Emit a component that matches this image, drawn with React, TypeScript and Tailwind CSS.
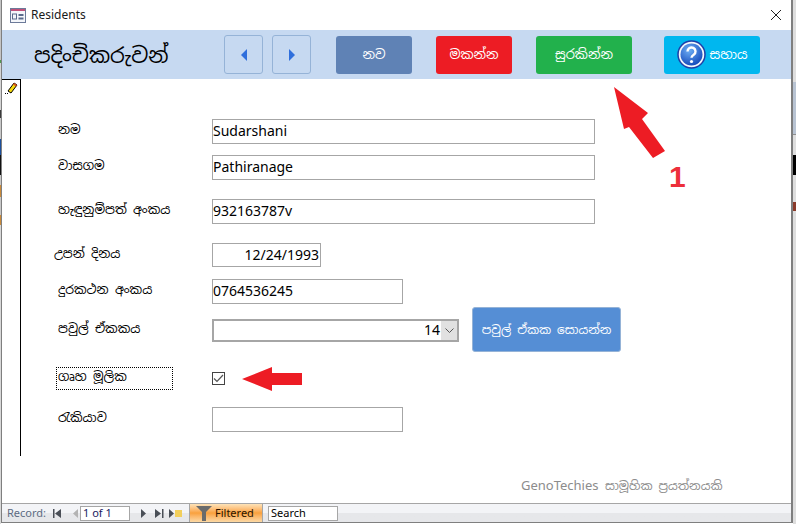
import React from 'react';

const sinhala = { fontFamily: '"Noto Sans Sinhala", "Noto Sans", "DejaVu Sans", sans-serif' };
const tahoma = { fontFamily: '"Noto Sans", "DejaVu Sans", sans-serif' };

// bits of the desktop behind the window, 1px strip on the left
const leftSpecks = [
  { h: 'h-[60px]', bg: 'bg-[#c4c4c4]' },
  { h: 'h-[3px]', bg: 'bg-[#4f9a4f]' },
  { h: 'h-[47px]', bg: 'bg-[#d4d4d4]' },
  { h: 'h-[8px]', bg: 'bg-[#3a3a3a]' },
  { h: 'h-[21px]', bg: 'bg-[#c8c8c8]' },
  { h: 'h-[16px]', bg: 'bg-[#1c4f9c]' },
  { h: 'h-[20px]', bg: 'bg-[#111111]' },
  { h: 'h-[10px]', bg: 'bg-[#c8c8c8]' },
  { h: 'h-[12px]', bg: 'bg-[#c98a3a]' },
  { h: 'h-[18px]', bg: 'bg-[#c8c8c8]' },
  { h: 'h-[10px]', bg: 'bg-[#c98a3a]' },
  { h: 'h-[300px]', bg: 'bg-[#d8d8d8]' },
];

const Label: React.FC<{ children: React.ReactNode; className?: string }> = ({ children, className = '' }) => (
  <span className={`text-[12.5px] leading-none text-black -translate-y-px ${className}`} style={sinhala}>{children}</span>
);

const Field: React.FC<{ w: string; value?: string; right?: boolean }> = ({ w, value, right }) => (
  <div className={`${w} h-full border border-[#a6a6a6] bg-white flex items-center text-[14px] text-black ${right ? 'justify-end pr-px' : ''}`} style={tahoma}>
    <span className="-translate-y-px">{value}</span>
  </div>
);

const NavButton: React.FC<{ points: string }> = ({ points }) => (
  <div className="w-[39px] h-[39px] rounded-[3px] border border-[#95b3d7] flex items-center justify-center">
    <svg width="6" height="12" viewBox="0 0 6 12"><polygon points={points} fill="#2f6fdc" /></svg>
  </div>
);

const HeadButton: React.FC<{ w: string; bg: string; children: React.ReactNode }> = ({ w, bg, children }) => (
  <div className={`${w} ${bg} h-[38px] rounded-[3px] flex items-center justify-center text-white text-[13px]`} style={sinhala}>
    {children}
  </div>
);

const HelpIcon = () => (
  <svg width="29" height="29" viewBox="0 0 29 29" className="mr-1">
    <defs>
      <radialGradient id="help" cx="0.4" cy="0.3" r="0.8">
        <stop offset="0" stopColor="#6fb0f5" />
        <stop offset="1" stopColor="#0b3fb5" />
      </radialGradient>
    </defs>
    <circle cx="14.5" cy="14.5" r="13.5" fill="#f3f6fb" stroke="#1c3fa8" strokeWidth="1.5" />
    <circle cx="14.5" cy="14.5" r="11" fill="url(#help)" />
    <path d="M10.5 11.5a4 4 0 1 1 6.2 3.3c-1.4.9-2.2 1.5-2.2 3" fill="none" stroke="#fff" strokeWidth="2.4" />
    <circle cx="14.5" cy="21.5" r="1.6" fill="#fff" />
  </svg>
);

const TransportIcon: React.FC<{ d: string; color?: string }> = ({ d, color = '#4a4f57' }) => (
  <svg width="9" height="9" viewBox="0 0 9 9" className="shrink-0"><path d={d} fill={color} /></svg>
);

export default function App() {
  return (
    <div className="w-[796px] h-[524px] bg-white flex items-start overflow-hidden" style={{ fontFamily: '"Liberation Sans", "DejaVu Sans", sans-serif' }}>
      <div className="w-px h-full flex flex-col shrink-0">
        {leftSpecks.map((s, i) => (
          <div key={i} className={`${s.h} ${s.bg} shrink-0`} />
        ))}
      </div>

      <div className="w-[792px] h-[523px] border-l border-r-2 border-b border-[#7f7f7f] flex flex-col shrink-0">
        <div className="h-[30px] flex items-center pl-2 pr-2 text-[12px] text-[#1a1a1a] shrink-0" style={tahoma}>
          <svg width="16" height="15" viewBox="0 0 16 15" className="mr-[5px]">
            <rect x="0.5" y="0.5" width="15" height="14" fill="#f4f6fa" stroke="#6c7a99" />
            <rect x="1" y="1" width="14" height="2" fill="#c0507a" />
            <rect x="2.5" y="6" width="4" height="5" fill="none" stroke="#5a6b8c" />
            <rect x="8.5" y="6" width="5" height="2" fill="#5a6b8c" />
            <rect x="8.5" y="9.5" width="5" height="2" fill="#5a6b8c" />
          </svg>
          <span className="flex-1">Residents</span>
          <svg width="12" height="12" viewBox="0 0 12 12" className="mr-px">
            <path d="M1 1l10 10M11 1L1 11" stroke="#222" strokeWidth="1" fill="none" />
          </svg>
        </div>

        <div className="h-[49px] bg-[#c6d9f1] flex items-center shrink-0">
          <span className="ml-8 w-[190px] text-[21px] text-black whitespace-nowrap translate-y-px" style={sinhala}>පදිංචිකරුවන්</span>
          <div className="flex gap-[9px]">
            <NavButton points="6,0 6,12 0,6" />
            <NavButton points="0,0 0,12 6,6" />
          </div>
          <div className="ml-[25px] flex items-center">
            <HeadButton w="w-[76px]" bg="bg-[#5f82b5]">නව</HeadButton>
            <HeadButton w="w-[76px] ml-6" bg="bg-[#ed1c24]">මකන්න</HeadButton>
            <HeadButton w="w-[96px] ml-6" bg="bg-[#22b14c]">සුරකින්න</HeadButton>
            <HeadButton w="w-[96px] ml-8" bg="bg-[#00b7ef]"><HelpIcon />සහාය</HeadButton>
          </div>
        </div>

        <div className="flex-1 flex min-h-0 relative">
          <div className="w-[19px] h-[377px] border-t border-r border-black shrink-0 flex justify-center pt-[2px]">
            <svg width="13" height="13" viewBox="0 0 13 13">
              <path d="M9 1l3 2-6 8-3-2z" fill="#f5d90a" stroke="#000" strokeWidth="1" />
              <path d="M9 1l3 2-1 1.5-3-2z" fill="#d9531e" />
              <rect x="0" y="11" width="1" height="1" fill="#000" />
              <rect x="2" y="11" width="1" height="1" fill="#000" />
            </svg>
          </div>

          <div className="flex-1 flex flex-col pt-10 pl-[35px]">
            <div className="flex items-center h-[25px]">
              <Label className="w-[156px] pl-[2px]">නම</Label>
              <Field w="w-[383px]" value="Sudarshani" />
            </div>
            <div className="flex items-center h-[25px] mt-[11px]">
              <Label className="w-[156px] pl-[2px]">වාසගම</Label>
              <Field w="w-[383px]" value="Pathiranage" />
            </div>
            <div className="flex items-center h-[25px] mt-[19px]">
              <Label className="w-[156px] pl-[2px]">හැඳුනුම්පත් අංකය</Label>
              <Field w="w-[383px]" value="932163787v" />
            </div>
            <div className="flex items-center h-[24px] mt-[19px]">
              <Label className="w-[156px] -ml-[2px] mr-[2px]">උපන් දිනය</Label>
              <Field w="w-[109px]" value="12/24/1993" right />
            </div>
            <div className="flex items-center h-[25px] mt-[12px]">
              <Label className="w-[156px] pl-[2px]">දුරකථන අංකය</Label>
              <Field w="w-[191px]" value="0764536245" />
            </div>
            <div className="flex items-center h-[23px] mt-[15px] relative">
              <Label className="w-[156px] pl-[2px]">පවුල් ඒකකය</Label>
              <div className="w-[247px] h-full border-2 border-[#a6a6a6] bg-white flex items-center justify-end text-[14px] text-black" style={tahoma}>
                <span className="-translate-y-px">14</span>
                <div className="ml-px w-[16px] h-full bg-[#e1e1e1] flex items-center justify-center">
                  <svg width="9" height="5" viewBox="0 0 9 5"><path d="M0.5 0.5l4 4 4-4" fill="none" stroke="#555" /></svg>
                </div>
              </div>
              {/* sits higher than the row, overlaps it */}
              <div className="absolute left-[416px] top-[-12px] w-[149px] h-[45px] rounded-[3px] bg-[#558ed5] border border-[#95b3d7] flex items-center justify-center text-white text-[12px]" style={sinhala}>
                පවුල් ඒකක සොයන්න
              </div>
            </div>
            <div className="flex items-center h-[23px] mt-[25px]">
              <div className="w-[117px] h-full border border-dotted border-black flex items-center pl-px">
                <Label>ගෘහ මූලික</Label>
              </div>
              <div className="ml-[39px] w-[13px] h-[13px] border border-[#444] flex items-center justify-center">
                <svg width="11" height="9" viewBox="0 0 11 9"><path d="M1 4.5l3 3 6-6.5" fill="none" stroke="#555" strokeWidth="1.2" /></svg>
              </div>
              <svg width="60" height="24" viewBox="0 0 60 24" className="ml-[17px]">
                <polygon points="0,12 30,0 30,6 60,6 60,18 30,18 30,24" fill="#ed1c24" />
              </svg>
            </div>
            <div className="flex items-center h-[25px] mt-[17px]">
              <Label className="w-[156px] pl-[2px]">රැකියාව</Label>
              <Field w="w-[191px]" />
            </div>
          </div>

          <svg width="54" height="72" viewBox="0 0 54 72" className="absolute left-[610px] top-[8px]">
            <polygon points="2,0 36,26 30,32 53,64 41,71 17,40 12,42" fill="#ed1c24" />
          </svg>
          <span className="absolute left-[667px] top-[83px] text-[30px] font-bold leading-none text-[#ed2f3a]">1</span>
          <span className="absolute left-[519px] top-[397px] text-[13px] text-[#8c8c8c] whitespace-nowrap" style={sinhala}>
            GenoTechies <span className="text-[12px]">සාමූහික ප්‍රයත්නයකි</span>
          </span>
        </div>

        <div className="h-[19px] border-t border-[#a6a6a6] bg-gradient-to-b from-[#f3f4f7] from-50% to-[#e6e7ea] to-50% flex items-center pl-[5px] text-[11px] shrink-0" style={tahoma}>
          <span className="w-[46px] text-[#5d6b82]">Record:</span>
          <TransportIcon d="M0 0h1.5v9H0zM8 0v9L2 4.5z" />
          <span className="w-[9px]" />
          <TransportIcon d="M7 0v9L2 4.5z" color="#b3b3b3" />
          <div className="w-[50px] h-[15px] bg-white border border-[#a6a6a6] flex items-center pl-[2px] text-[#1a1a60]">1 of 1</div>
          <span className="w-[9px]" />
          <TransportIcon d="M2 0v9l5-4.5z" />
          <span className="w-[7px]" />
          <TransportIcon d="M0 0v9l6-4.5zM7 0h1.5v9H7z" />
          <span className="w-[5px]" />
          <TransportIcon d="M0 0v9l5-4.5z" />
          <div className="w-[7px] h-[7px] bg-[#f2cf5c] -ml-[3px] shrink-0" />
          <div className="ml-[7px] w-[74px] h-full bg-gradient-to-b from-[#fde3b8] via-[#f9a13c] to-[#fcd9a4] border-x border-[#a6a6a6] flex items-center text-[#2b1400]">
            <svg width="16" height="15" viewBox="0 0 16 15" className="ml-[6px] mr-[3px]"><path d="M0 0h16l-6 6v9H6V6z" fill="#6b6b6b" /></svg>
            <span>Filtered</span>
          </div>
          <div className="ml-[5px] w-[70px] h-[15px] bg-white border border-[#a6a6a6] flex items-center pl-[2px] text-black">Search</div>
        </div>
      </div>

      <div className="flex-1 h-full flex flex-col bg-[#dedede]">
        <div className="h-[82px]" />
        <div className="h-[52px] bg-[#b9c4d3]" />
        <div className="h-px bg-[#8f8f8f]" />
        <div className="h-[20px]" />
        <div className="h-[20px] bg-black" />
        <div className="h-[27px]" />
        <div className="h-[9px] bg-[#8a3a2a]" />
        <div className="flex-1" />
      </div>
    </div>
  );
}
